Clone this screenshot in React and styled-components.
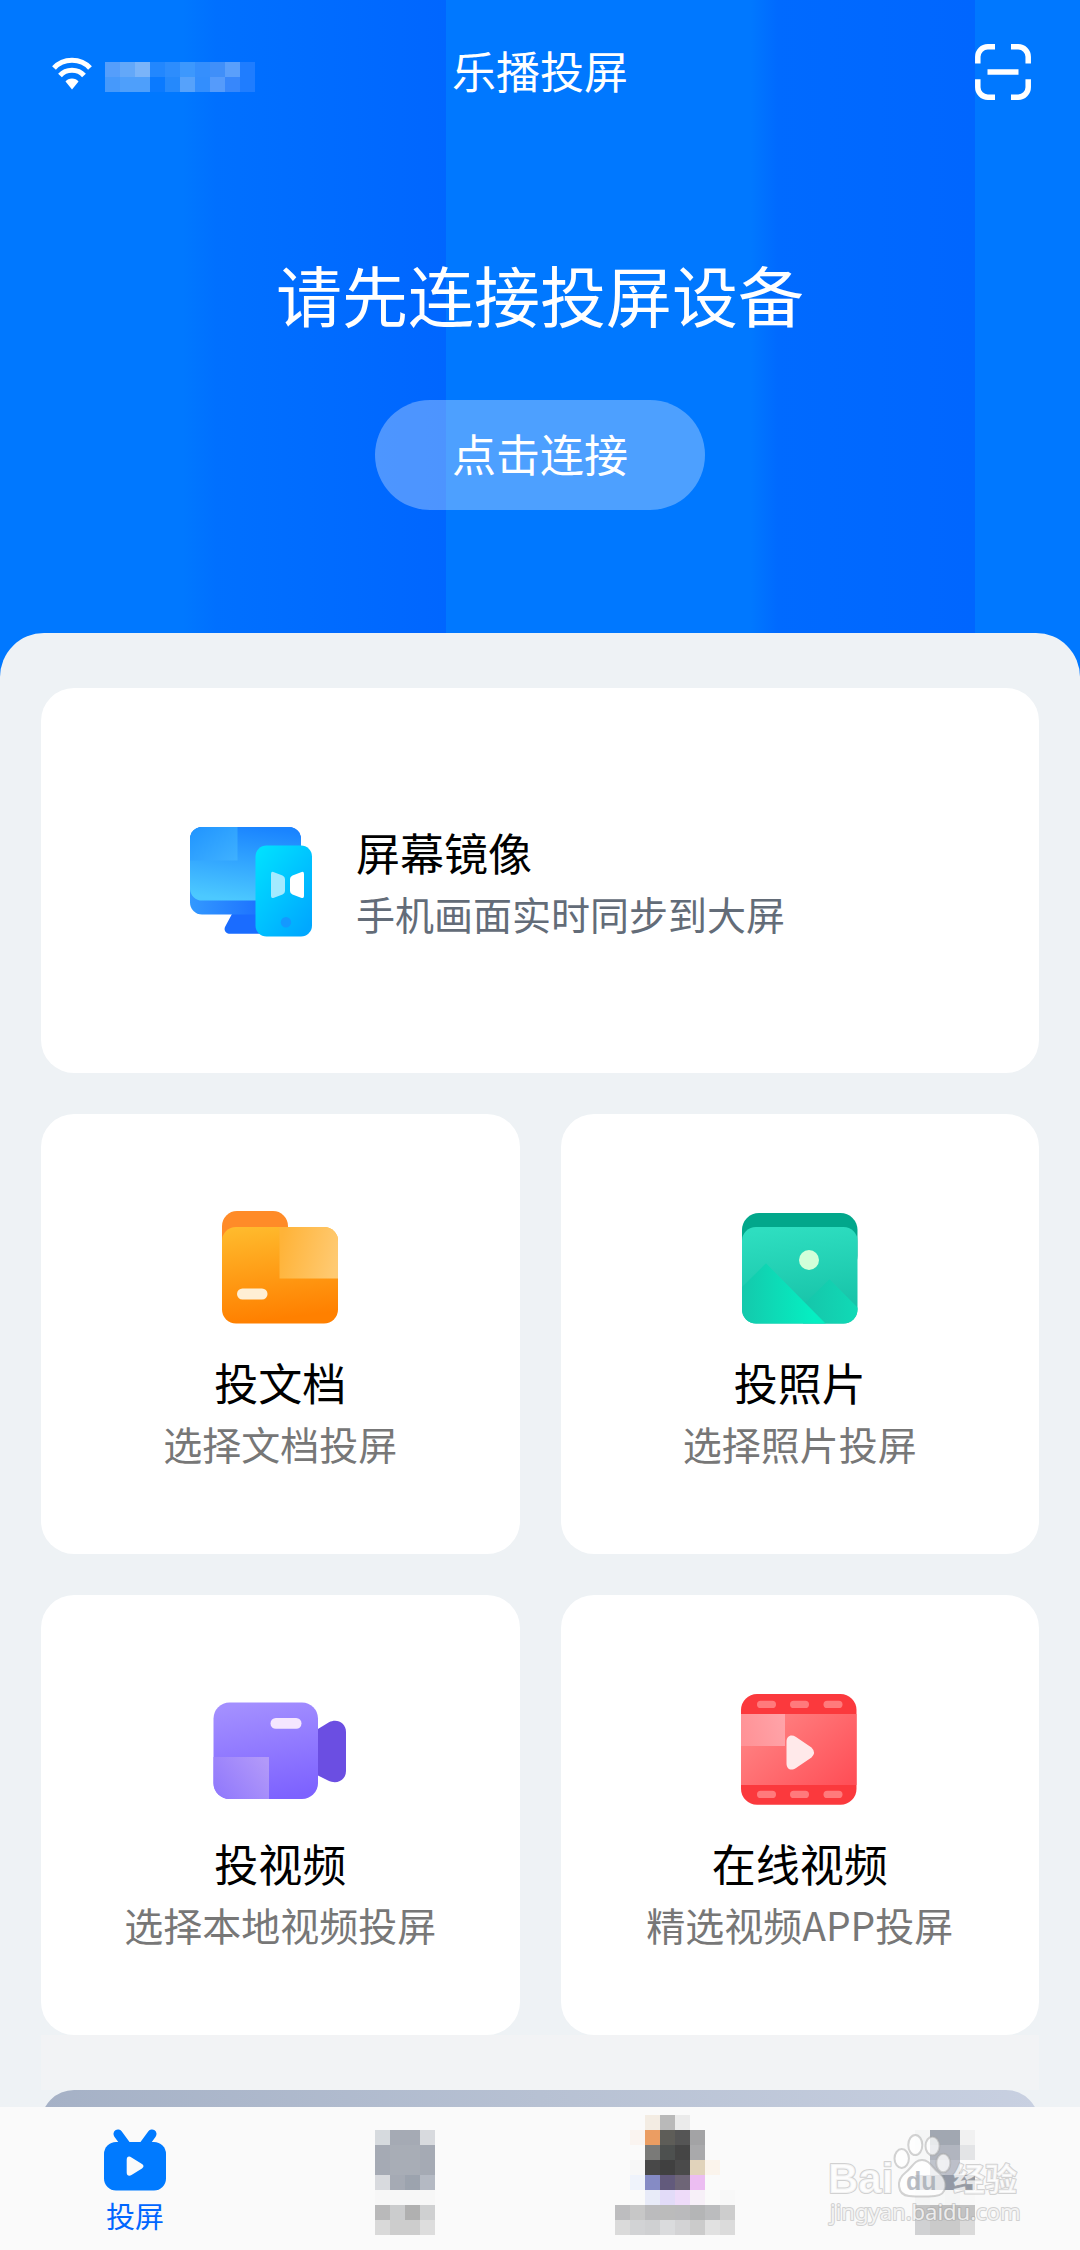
import React from "react";
import styled, { createGlobalStyle } from "styled-components";

const GlobalStyle = createGlobalStyle`
    * {
        box-sizing: border-box;
    }
    body {
        margin: 0;
        font-family: "Noto Sans CJK SC", "Noto Sans", sans-serif;
    }
    button {
        font-family: inherit;
        border: 0;
        padding: 0;
        margin: 0;
        cursor: pointer;
    }
    svg {
        display: block;
        flex-shrink: 0;
    }
`;

const Page = styled.div`
    height: 100vh;
    display: flex;
    flex-direction: column;
    background: linear-gradient(
        90deg,
        #0078ff 0%,
        #0078ff 17%,
        #0070ff 20%,
        #0066ff 41.3%,
        #0078ff 41.3%,
        #0078ff 69.5%,
        #006aff 72%,
        #0066ff 90.3%,
        #0078ff 90.3%
    );
`;

const Scroller = styled.main`
    flex: 1;
    min-height: 0;
    overflow-y: auto;
    scrollbar-width: none;
`;

const Header = styled.header`
    display: grid;
    grid-template-columns: 1fr auto 1fr;
    align-items: center;
    padding: 44px 49px 0;
`;

const Network = styled.div`
    display: flex;
    align-items: flex-end;
    gap: 10px;
    padding-top: 4px;
`;

const AppName = styled.span`
    padding-bottom: 4px;
    font-size: 44px;
    line-height: 52px;
    color: #fff;
`;

const ScanButton = styled.button`
    justify-self: end;
    background: none;
`;

const Hero = styled.section`
    display: flex;
    flex-direction: column;
    align-items: center;
    gap: 66px;
    padding: 152px 40px 123px;
`;

const HeroTitle = styled.h1`
    margin: 0;
    font-size: 66px;
    font-weight: 400;
    line-height: 82px;
    color: #fff;
`;

const ConnectButton = styled.button`
    padding: 0 77px 4px;
    border-radius: 55px;
    background: rgba(255, 255, 255, 0.3);
    font-size: 44px;
    line-height: 106px;
    color: #fff;
`;

const Sheet = styled.section`
    padding: 55px 41px 0;
    border-radius: 44px 44px 0 0;
    background: #eef2f5;
`;

const Cards = styled.div`
    display: grid;
    grid-template-columns: 1fr 1fr;
    gap: 41px;
`;

const Card = styled.button`
    display: flex;
    flex-direction: column;
    align-items: center;
    gap: 15px;
    padding: 88px 16px 81px;
    border-radius: 33px;
    background: #fff;
`;

const WideCard = styled(Card)`
    grid-column: 1 / -1;
    flex-direction: row;
    gap: 38px;
    padding: 127px 143px 124px;
    text-align: left;
`;

const CardText = styled.span`
    display: flex;
    flex-direction: column;
`;

const CardTitle = styled.span`
    font-size: 44px;
    line-height: 62px;
    color: #000;
`;

const CardHint = styled.span`
    font-size: 39px;
    line-height: 60px;
    color: ${(props) => props.$color || "#777"};
`;

const Divider = styled.div`
    height: 55px;
    background: #f2f3f5;
`;

const Banner = styled.div`
    height: 240px;
    border-radius: 33px 33px 0 0;
    background: linear-gradient(90deg, #a5b1c6, #b7c1d3 50%, #c8d0e1);
`;

const TabBar = styled.nav`
    position: relative;
    display: grid;
    grid-template-columns: repeat(4, 1fr);
    background: #fafafa;
`;

const Tab = styled.button`
    display: flex;
    flex-direction: column;
    align-items: center;
    justify-content: flex-start;
    height: 143px;
    padding-top: ${(props) => (props.$masked ? "8px" : "22px")};
    background: none;
`;

const TabLabel = styled.span`
    margin-top: 4px;
    font-size: 29px;
    line-height: 40px;
    color: #0066ff;
`;

const Watermark = styled.svg`
    position: absolute;
    top: 3px;
    right: 40px;
    pointer-events: none;
`;

const CELL = 15;

// Pixelated block used in place of private names and avatars.
const Mosaic = ({ rows, label }) => (
    <svg
        width={rows[0].length * CELL}
        height={rows.length * CELL}
        shapeRendering="crispEdges"
        role="img"
        aria-label={label}
    >
        {rows.map((row, y) =>
            row.map((fill, x) =>
                fill ? <rect key={`${x}-${y}`} x={x * CELL} y={y * CELL} width={CELL} height={CELL} fill={fill} /> : null
            )
        )}
    </svg>
);

const networkCells = [
    ["#559efb", "#63a8f9", "#7ab4f9", "#2287fe", "#2d8dfd", "#3d98fd", "#358ffd", "#408ff9", "#5a9ffb", "#1f7dff"],
    ["#4699fb", "#4e9ffb", "#4e9ffb", "#0a7aff", "#2589fc", "#56a2fb", "#338efd", "#559bfb", "#3787fb", "#1f7dff"],
];

const none4 = ["", "", "", ""];

const tabCells = [
    [
        ["#d6dade", "#a5aab4", "#a5aab4", "#d8dade"],
        ["#a5aab4", "#a8adb6", "#a8adb6", "#a5aab4"],
        ["#a5aab4", "#a8adb6", "#a8adb6", "#a5aab4"],
        ["#d8dade", "#a5aab4", "#9ca3ae", "#b4b9c3"],
        ["#f7f7f7", "#f7f7f7", "#f7f7f7", "#f7f7f7"],
        ["#b9b9ba", "#cbcccd", "#b0b0b0", "#cfd0d1"],
        ["#d9d9d9", "#cdcdcd", "#cdcdcd", "#dddddd"],
    ],
    [
        ["", "#faf4f0", "#eb9d62", "#5e5d58", "#555555", "#a3a3a5", "", ""],
        ["", "", "#7a7a78", "#4d504f", "#454545", "#a9a9ab", "", ""],
        ["", "#f7f7f7", "#484848", "#404040", "#4a4a4a", "#e1d3bb", "#fbf4ec", ""],
        ["", "#eff3fb", "#858bc5", "#625a7c", "#6e6577", "#ecbdf2", "", ""],
        ["", "", "#e8ebf8", "#e2dbf8", "#eedbf9", "#f7f0f8", "", "#f8f8f8"],
        ["#bdbdbf", "#c7c7c7", "#bbbbbd", "#bbbbbb", "#bababc", "#b4b5b6", "#bbbcbe", "#cdcdcd"],
        ["#dadada", "#d2d3d5", "#cfd0d2", "#dadbdd", "#d3d3d5", "#cbcbcb", "#e1e1e1", "#dbdbdb"],
    ],
    [
        ["#f4f5f5", "#a1a7b1", "#a1a7b1", "#f1f1f1"],
        ["#f7f8f8", "#b1b5bf", "#b1b5bf", "#e3e4e6"],
        ["", "#c0c4cc", "#bcbfc9", ""],
        ["#a3a9b2", "#8e95a0", "#9298a5", "#9298a3"],
        ["#f4f5f5", "#f6f7f7", "#f4f5f5", "#f8f8f8"],
        ["#c4c4c4", "#bebebe", "#bebebe", "#c3c3c3"],
        ["#d0d1d3", "#cacaca", "#cacaca", "#dadada"],
    ],
];

const topRows = [none4, ["", "", "#f3ece3", "#b9b9b9", "#ebebeb", "", "", ""], none4];

const WifiIcon = () => (
    <svg width="46" height="36" viewBox="0 0 46 36" fill="none">
        <path d="M5 12C14 1.5 32 1.5 41 12" stroke="#fff" strokeWidth="5" />
        <path d="M11 19.5C17 12.5 29 12.5 35 19.5" stroke="#fff" strokeWidth="5" />
        <path d="M16.5 25.5C19 21.5 27 21.5 29.5 25.5L23 33.5Z" fill="#fff" />
    </svg>
);

const ScanIcon = () => (
    <svg width="56" height="56" viewBox="0 0 56 56" fill="none" stroke="#fff" strokeWidth="5.5">
        <path d="M2.8 19.5V12.8a10 10 0 0 1 10-10H20" />
        <path d="M36 2.8h7.2a10 10 0 0 1 10 10v6.7" />
        <path d="M53.2 35.3v7.9a10 10 0 0 1-10 10H36" />
        <path d="M20 53.2h-7.2a10 10 0 0 1-10-10v-7.9" />
        <path d="M12.5 28h31" />
    </svg>
);

const MirrorIcon = () => (
    <svg width="134" height="134" viewBox="0 0 134 134">
        <defs>
            <linearGradient id="mirrorBase" x1="0" y1="1" x2="1" y2="1">
                <stop offset="0" stopColor="#3399ff" />
                <stop offset="0.7" stopColor="#1a6dff" />
            </linearGradient>
            <linearGradient id="mirrorScreen" x1="0.6" y1="0" x2="0.4" y2="1">
                <stop offset="0" stopColor="#1a84ff" />
                <stop offset="1" stopColor="#4cc9ff" />
            </linearGradient>
            <linearGradient id="mirrorShine" x1="0" y1="0" x2="1" y2="1">
                <stop offset="0" stopColor="#2094ff" />
                <stop offset="1" stopColor="#3fb1ff" />
            </linearGradient>
            <linearGradient id="mirrorPhone" x1="0" y1="0" x2="0.8" y2="1">
                <stop offset="0" stopColor="#00e4ff" />
                <stop offset="1" stopColor="#00a8ff" />
            </linearGradient>
        </defs>
        <path d="M48.5 98L41.5 111C39 115 42 118.700 46 118.700H84V98Z" fill="#1a6cff" />
        <rect x="6" y="12" width="111" height="87.500" rx="12" fill="url(#mirrorBase)" />
        <path d="M6 24a12 12 0 0 1 12-12H105a12 12 0 0 1 12 12V85.500H18A12 12 0 0 1 6 74Z" fill="url(#mirrorScreen)" />
        <path d="M6 24a12 12 0 0 1 12-12H53.500V45.500H6Z" fill="url(#mirrorShine)" />
        <rect x="71.500" y="30.500" width="56.500" height="91" rx="11" fill="url(#mirrorPhone)" />
        <path d="M87 59q0-3 3-1.800L98.500 60.500Q101 61.500 101 64V76q0 2.500-2.500 3.500L90 82.700Q87 84 87 81Z" fill="#a3eaff" />
        <path d="M120 59q0-3-3-1.800L108.500 60.500Q106 61.500 106 64V76q0 2.500 2.500 3.500L117 82.700Q120 84 120 81Z" fill="#fff" />
        <circle cx="102" cy="107.300" r="5.200" fill="#1499ff" />
    </svg>
);

const FolderIcon = () => (
    <svg width="134" height="134" viewBox="0 0 134 134">
        <defs>
            <linearGradient id="folderFront" x1="0" y1="0" x2="0.150" y2="1">
                <stop offset="0" stopColor="#ffbc2e" />
                <stop offset="1" stopColor="#ff8000" />
            </linearGradient>
            <linearGradient id="folderShine" x1="0" y1="0.400" x2="1" y2="0.600">
                <stop offset="0" stopColor="#ffb338" />
                <stop offset="1" stopColor="#ffca72" />
            </linearGradient>
        </defs>
        <path d="M9 24a15 15 0 0 1 15-15H60a15 15 0 0 1 15 15V50H9Z" fill="#ff8b28" />
        <rect x="9" y="25" width="116" height="96.500" rx="14" fill="url(#folderFront)" />
        <path d="M66.500 25H111a14 14 0 0 1 14 14V76.500H66.500Z" fill="url(#folderShine)" />
        <rect x="24" y="86.500" width="30.500" height="11" rx="5.500" fill="#ffefd4" />
    </svg>
);

const PhotoIcon = () => (
    <svg width="134" height="134" viewBox="0 0 134 134">
        <defs>
            <linearGradient id="photoFront" x1="0.400" y1="0" x2="0.550" y2="1">
                <stop offset="0" stopColor="#2edec0" />
                <stop offset="1" stopColor="#14bfa5" />
            </linearGradient>
            <linearGradient id="photoHill" x1="0" y1="0.900" x2="0.850" y2="0.900">
                <stop offset="0" stopColor="#14c9ac" />
                <stop offset="1" stopColor="#05efc2" />
            </linearGradient>
            <linearGradient id="photoHillFar" x1="0" y1="0.500" x2="1" y2="0.500">
                <stop offset="0" stopColor="#16c5aa" />
                <stop offset="1" stopColor="#10dab6" />
            </linearGradient>
            <clipPath id="photoClip">
                <rect x="9" y="25" width="115.500" height="96.500" rx="14" />
            </clipPath>
        </defs>
        <rect x="9" y="11" width="115.500" height="60" rx="17" fill="#02a78b" />
        <g clipPath="url(#photoClip)">
            <rect x="9" y="25" width="116" height="97" fill="url(#photoFront)" />
            <path d="M70 103L96.500 77.300L125 106V122H70Z" fill="url(#photoHillFar)" />
            <path d="M9 85L33 61.300L93 122H9Z" fill="url(#photoHill)" />
            <circle cx="76" cy="58" r="10" fill="#d2ffd9" />
        </g>
    </svg>
);

const CameraIcon = () => (
    <svg width="134" height="134" viewBox="0 0 134 134">
        <defs>
            <linearGradient id="cameraBody" x1="0.400" y1="0" x2="0.600" y2="1">
                <stop offset="0" stopColor="#a38fff" />
                <stop offset="1" stopColor="#7d62ff" />
            </linearGradient>
            <linearGradient id="cameraShine" x1="0" y1="0.800" x2="1" y2="0.200">
                <stop offset="0" stopColor="#9179fc" />
                <stop offset="1" stopColor="#b299f9" />
            </linearGradient>
        </defs>
        <path d="M100 49L116 39.300C124 35 133 40 133 49V88C133 97 124 102 115 97.500L100 90Z" fill="#6b4ee2" />
        <rect x="0.500" y="19.500" width="104.500" height="96.500" rx="16" fill="url(#cameraBody)" />
        <path d="M0.500 74H56V116H16.500a16 16 0 0 1-16-16Z" fill="url(#cameraShine)" />
        <rect x="57.500" y="35" width="31" height="10.700" rx="5.300" fill="#f5e6ff" />
    </svg>
);

const FilmIcon = () => (
    <svg width="134" height="134" viewBox="0 0 134 134">
        <defs>
            <linearGradient id="filmBody" x1="0" y1="0.200" x2="1" y2="0.900">
                <stop offset="0" stopColor="#ff8585" />
                <stop offset="1" stopColor="#ff4f57" />
            </linearGradient>
            <linearGradient id="filmShine" x1="0" y1="0.600" x2="1" y2="0.400">
                <stop offset="0" stopColor="#ff9296" />
                <stop offset="1" stopColor="#ffa3a8" />
            </linearGradient>
        </defs>
        <rect x="8" y="11" width="115.500" height="110.700" rx="16" fill="#fb393d" />
        <rect x="8" y="31" width="115.500" height="71" fill="url(#filmBody)" />
        <rect x="8" y="31" width="44" height="32" fill="url(#filmShine)" />
        {[24, 57, 90.5].map((x) => (
            <g key={x} fill="#ff7a7c">
                <rect x={x} y="17.700" width="19" height="7.400" rx="3.700" />
                <rect x={x} y="107.700" width="19" height="7.400" rx="3.700" />
            </g>
        ))}
        <path d="M53.500 59C53.500 53 58 51 63 54L78.500 64.500Q83.500 69.500 78.500 74.500L63 85C58 88.500 53.500 86 53.500 80.500Z" fill="#ffe9ea" />
    </svg>
);

const TvIcon = () => (
    <svg width="62" height="62" viewBox="0 0 62 62">
        <path d="M14 5L25 20M48 5L37 20" stroke="#007aff" strokeWidth="9" strokeLinecap="round" />
        <rect y="13" width="62" height="48.500" rx="12" fill="#007aff" />
        <path d="M22.700 31C22.700 27.500 25 26.800 27.500 28.500L38 35Q41 37.200 38 39.500L27.500 46C25 47.700 22.700 46.500 22.700 43.500Z" fill="#fafafa" />
    </svg>
);

const tiles = [
    { title: "投文档", hint: "选择文档投屏", Icon: FolderIcon },
    { title: "投照片", hint: "选择照片投屏", Icon: PhotoIcon },
    { title: "投视频", hint: "选择本地视频投屏", Icon: CameraIcon },
    { title: "在线视频", hint: "精选视频APP投屏", Icon: FilmIcon },
];

const App = () => {
    return (
        <Page>
            <GlobalStyle />
            <Scroller>
                <Header>
                    <Network>
                        <WifiIcon />
                        <Mosaic rows={networkCells} label="Wi-Fi" />
                    </Network>
                    <AppName>乐播投屏</AppName>
                    <ScanButton aria-label="扫一扫">
                        <ScanIcon />
                    </ScanButton>
                </Header>
                <Hero>
                    <HeroTitle>请先连接投屏设备</HeroTitle>
                    <ConnectButton>点击连接</ConnectButton>
                </Hero>
                <Sheet>
                    <Cards>
                        <WideCard>
                            <MirrorIcon />
                            <CardText>
                                <CardTitle>屏幕镜像</CardTitle>
                                <CardHint $color="#636c78">手机画面实时同步到大屏</CardHint>
                            </CardText>
                        </WideCard>
                        {tiles.map(({ title, hint, Icon }) => (
                            <Card key={title}>
                                <Icon />
                                <CardText>
                                    <CardTitle>{title}</CardTitle>
                                    <CardHint>{hint}</CardHint>
                                </CardText>
                            </Card>
                        ))}
                    </Cards>
                    <Divider />
                    <Banner />
                </Sheet>
            </Scroller>
            <TabBar>
                <Tab>
                    <TvIcon />
                    <TabLabel>投屏</TabLabel>
                </Tab>
                {tabCells.map((rows, i) => (
                    <Tab key={i} $masked>
                        <Mosaic rows={[topRows[i], ...rows]} label={`标签 ${i + 2}`} />
                    </Tab>
                ))}
                <Watermark width="220" height="130" viewBox="0 0 220 130">
                    <g fill="#fff" fillOpacity="0.75" stroke="#a8a8a8" strokeOpacity="0.5" strokeWidth="2" strokeLinejoin="round">
                        <ellipse cx="81.700" cy="48.500" rx="7.200" ry="9.500" />
                        <ellipse cx="95.300" cy="35" rx="7" ry="10" />
                        <ellipse cx="112.500" cy="36" rx="7" ry="9.300" />
                        <ellipse cx="123.300" cy="53" rx="7" ry="9.300" />
                        <path d="M102 50C110 50 112 58 119 63C128 70 128 85 115 86C109 86.500 95 86.500 89 86C77 85 76 70 85 63C92 58 94 50 102 50Z" />
                        <text x="8" y="83" fontSize="42" fontWeight="700" fontFamily="Liberation Sans, sans-serif" paintOrder="stroke">
                            Bai
                        </text>
                        <text x="133" y="81" fontSize="32" fontWeight="700" fontFamily="Noto Sans CJK SC, sans-serif" paintOrder="stroke">
                            经验
                        </text>
                        <text x="10" y="110" fontSize="22" fontFamily="Noto Sans, sans-serif" paintOrder="stroke">
                            jingyan.baidu.com
                        </text>
                    </g>
                    <text x="86" y="80" fontSize="25" fontWeight="700" fontFamily="Liberation Sans, sans-serif" fill="#8e95a0" fillOpacity="0.6">
                        du
                    </text>
                </Watermark>
            </TabBar>
        </Page>
    );
};

export default App;
